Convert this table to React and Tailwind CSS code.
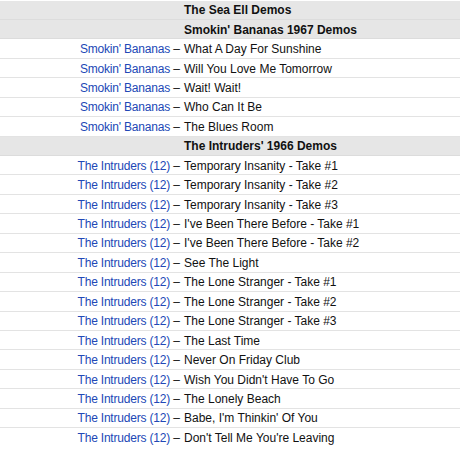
const groups = [
  { title: 'The Sea Ell Demos', rows: [] },
  {
    title: "Smokin' Bananas 1967 Demos",
    rows: [
      ["Smokin' Bananas", 'What A Day For Sunshine'],
      ["Smokin' Bananas", 'Will You Love Me Tomorrow'],
      ["Smokin' Bananas", 'Wait! Wait!'],
      ["Smokin' Bananas", 'Who Can It Be'],
      ["Smokin' Bananas", 'The Blues Room'],
    ],
  },
  {
    title: "The Intruders' 1966 Demos",
    rows: [
      'Temporary Insanity - Take #1',
      'Temporary Insanity - Take #2',
      'Temporary Insanity - Take #3',
      "I've Been There Before - Take #1",
      "I've Been There Before - Take #2",
      'See The Light',
      'The Lone Stranger - Take #1',
      'The Lone Stranger - Take #2',
      'The Lone Stranger - Take #3',
      'The Last Time',
      'Never On Friday Club',
      "Wish You Didn't Have To Go",
      'The Lonely Beach',
      "Babe, I'm Thinkin' Of You",
      "Don't Tell Me You're Leaving",
    ].map(t => ['The Intruders (12)', t]),
  },
]

export default function App() {
  let n = 0
  const total = groups.reduce((a, g) => a + 1 + g.rows.length, 0)
  return (
    <div className="w-[460px] h-[460px] bg-white pt-[0.5px] text-[12px] text-[#111]"
      style={{ fontFamily: '"Liberation Sans", Arial, sans-serif' }}>
      {groups.map(g => {
        n++
        return (
          <div key={g.title}>
            <div className="flex h-[19.45px] items-center pt-[1px] bg-[#e6e6e6] border-b border-[#dcdcdc]">
              <div className="w-[184px]" />
              <div className="font-bold">{g.title}</div>
            </div>
            {g.rows.map(([a, t], i) => {
              n++
              const last = n === total
              return (
                <div key={i}
                  className={last
                    ? 'flex h-[19.45px] items-center pt-[1px]'
                    : 'flex h-[19.45px] items-center pt-[1px] border-b border-[#e3e3e3]'}>
                  <div className="w-[180px] text-right whitespace-nowrap">
                    <a className="text-[#2148b6] tracking-[-0.2px]">{a}</a> –
                  </div>
                  <div className="pl-[4px] whitespace-nowrap">{t}</div>
                </div>
              )
            })}
          </div>
        )
      })}
    </div>
  )
}
